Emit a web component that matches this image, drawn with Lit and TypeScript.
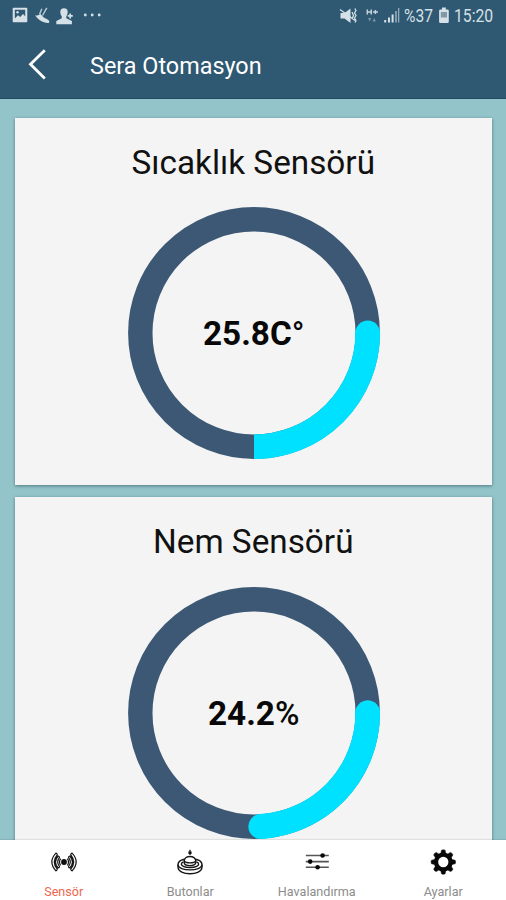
import { LitElement, html, css, svg } from "lit";
import { customElement, property } from "lit/decorators.js";

const polar = (deg: number, r: number, c: number) => {
  const a = (deg * Math.PI) / 180;
  return `${(c + r * Math.cos(a)).toFixed(2)} ${(c + r * Math.sin(a)).toFixed(2)}`;
};

@customElement("sensor-card")
class SensorCard extends LitElement {
  @property() heading = "";
  @property() value = "";
  @property() unit = "";
  @property({ type: Number }) start = 90;
  @property({ type: Boolean }) rounded = false;

  static styles = css`
    :host {
      display: flex;
      flex-direction: column;
      align-items: center;
      box-sizing: border-box;
      height: 367px;
      flex: none;
      background: #f4f4f4;
      box-shadow: 0 1px 3px rgba(20, 60, 70, 0.55);
    }
    .title {
      font-size: 33.3px;
      line-height: 40px;
      margin-top: 25px;
      color: #111;
      white-space: nowrap;
    }
    .gauge {
      display: grid;
      place-items: center;
      margin-top: 24.3px;
      margin-left: 1px;
      width: 252px;
      height: 252px;
    }
    .gauge > * {
      grid-area: 1 / 1;
    }
    .value {
      font-size: 33.3px;
      line-height: 40px;
      padding-top: 2px;
      font-weight: 700;
      color: #080808;
    }
    .unit {
      font-weight: 500;
    }
  `;

  render() {
    const path = `M${polar(this.start, 113.7, 126)}A113.7 113.7 0 0 0 ${polar(0, 113.7, 126)}`;
    return html`
      <div class="title">${this.heading}</div>
      <div class="gauge">
        <svg width="252" height="252" viewBox="0 0 252 252" fill="none" stroke-width="24.4">
          <circle cx="126" cy="126" r="113.7" stroke="#3d5875" />
          <path d=${path} stroke="#00e0ff" stroke-width="24.8" stroke-linecap=${this.rounded ? "round" : "butt"} />
          <circle cx="239.7" cy="126" r="12.4" fill="#00e0ff" stroke="none" />
        </svg>
        <div class="value">${this.value}<span class="unit">${this.unit}</span></div>
      </div>
    `;
  }
}

const sensorIcon = svg`<g fill="none" stroke="#161616" stroke-width="1.2" stroke-linejoin="round">
  <circle cx="13" cy="13" r="2.9" fill="#111" stroke="none"/>
  <path d="M4.9 4.2Q-3.2 13 4.9 21.8Q6.4 21.4 6.2 20Q.4 13 6.2 6Q6.4 4.6 4.9 4.2zM7.2 7Q1.8 13 7.2 19Q8.6 18.6 8.4 17.4Q5 13 8.4 8.6Q8.6 7.4 7.2 7zM9.6 9.6Q7.4 13 9.6 16.4"/>
  <path d="M21.1 4.2Q29.2 13 21.1 21.8Q19.6 21.4 19.8 20Q25.6 13 19.8 6Q19.6 4.6 21.1 4.2zM18.8 7Q24.2 13 18.8 19Q17.4 18.6 17.6 17.4Q21 13 17.6 8.6Q17.4 7.4 18.8 7zM16.4 9.6Q18.6 13 16.4 16.4"/></g>`;
const buttonIcon = svg`<g fill="none" stroke="#161616" stroke-width="1.4">
  <path d="M13 .8V4" stroke-width="1.3"/><path d="M11.4 2.600h3.200v2.200L13 6l-1.600-1.200z" fill="#111" stroke="none"/>
  <path d="M7.200 12C7.200 6 18.800 6 18.800 12"/>
  <path d="M7.200 11.600v2c0 4.200 11.600 4.200 11.600 0v-2M7.200 11.900c1.600 2.600 10 2.600 11.600 0"/>
  <path d="M7.200 10.200C3 11 1 13.400 1 15.800c0 6.800 24 6.800 24 0 0-2.400-2-4.800-6.200-5.600"/>
  <path d="M1 15.800v2.200c0 9 24 9 24 0v-2.200M6.400 12.800c-2.800 1.400-2.600 3.400 0 4.600 3.200 1.600 10 1.600 13.200 0 2.600-1.200 2.800-3.200 0-4.600"/></g>`;
const sliderIcon = svg`<g stroke="#555" stroke-width="1.6">
  <path d="M1.800 6.500h23M1.800 12.600h23M1.800 18.200h23"/></g>
  <g fill="#080808"><circle cx="18.600" cy="6.500" r="2.300"/><circle cx="6.200" cy="12.600" r="2.300"/><circle cx="13.600" cy="18.200" r="2.300"/></g>`;
const gearIcon = svg`<circle cx="13.300" cy="13" r="7.300" fill="none" stroke="#080808" stroke-width="4.300"/>
  ${[0, 45, 90, 135, 180, 225, 270, 315].map(
    (a) => svg`<path d="M10.800 4.500L11.500 1.200Q13.300 .2 15.100 1.200L15.800 4.500z" fill="#080808" stroke="#080808" stroke-width=".5" transform="rotate(${a} 13.3 13)"/>`
  )}`;

const tabs = [
  { label: "Sensör", icon: sensorIcon, active: true },
  { label: "Butonlar", icon: buttonIcon, active: false },
  { label: "Havalandırma", icon: sliderIcon, active: false },
  { label: "Ayarlar", icon: gearIcon, active: false },
];

@customElement("app-root")
class AppRoot extends LitElement {
  static styles = css`
    :host {
      display: flex;
      flex-direction: column;
      width: 506px;
      height: 900px;
      overflow: hidden;
      background: #93c4c9;
      font-family: Roboto, "Liberation Sans", sans-serif;
    }
    svg {
      display: block;
    }
    .top {
      height: 99px;
      flex: none;
      background: #2f5872;
      border-bottom: 1px solid #234963;
      box-sizing: border-box;
      color: #fff;
    }
    .status {
      display: flex;
      justify-content: space-between;
      height: 32px;
      color: #d5e0e7;
    }
    .right {
      display: flex;
      align-items: center;
      padding-right: 12px;
    }
    .pct,
    .clock {
      font-size: 17.5px;
      line-height: 32px;
      transform-origin: left center;
      white-space: nowrap;
    }
    .pct {
      width: 29px;
      transform: scaleX(0.89);
    }
    .clock {
      width: 40px;
      transform: scaleX(0.9);
    }
    .bar {
      display: flex;
      align-items: center;
      height: 66px;
      padding-left: 25px;
    }
    .name {
      margin-left: 41px;
      margin-top: 2px;
      font-size: 23.4px;
      line-height: 32px;
      white-space: nowrap;
    }
    .list {
      display: flex;
      flex-direction: column;
      gap: 12.4px;
      flex: 1;
      min-height: 0;
      overflow: hidden;
      padding: 19px 14.5px 0 15px;
    }
    .tabs {
      display: grid;
      grid-template-columns: repeat(4, 1fr);
      height: 60px;
      flex: none;
      background: #fff;
      box-shadow: 0 -1px 1px rgba(0, 0, 0, 0.08);
      z-index: 1;
    }
    .tab {
      display: flex;
      flex-direction: column;
      align-items: center;
      padding-top: 9px;
      padding-left: 1px;
      font-size: 12.6px;
      line-height: 16px;
      color: #8c8c8c;
    }
    .label {
      margin-top: 9px;
    }
    .active {
      color: #f0664f;
    }
  `;

  render() {
    return html`
      <div class="top">
        <div class="status">
          <svg width="110" height="32" viewBox="0 0 110 32" fill="#d5e0e7">
            <path fill-rule="evenodd" d="M13.5 7.7h13q.8 0 .8.8v13q0 .8-.8.8h-13q-.8 0-.8-.8v-13q0-.8.8-.8zm1.3 2v8.7l3.2-3.2 2.2 1.8 2.8-3.1 2.2 2.4V9.7z" />
            <circle cx="17.5" cy="12.3" r="1.2" />
            <path d="M35 15.2q3.5.7 5.5-1.2l3 3.2 4.5 2.6q2 1.3 1.2 2.6-1 1.2-4.4.2-6-1.9-9.8-7.4z" />
            <path d="M39.5 14.5l2.3-5.7M42.5 15.5L46.8 7.8" fill="none" stroke="#b4c6d1" stroke-width="1.5" />
            <path d="M64 8.3c-4.6 0-4.3 5.2-2.2 8.3v1.6l-5.5 2.9v3.1h15.6v-3.1L66.3 18.2v-1.6c2.1-3.1 2.3-8.3-2.3-8.3z" />
            <path d="M67.7 15.9h5.1M70.2 13.4v5" fill="none" stroke="#d5e0e7" stroke-width="1.7" />
            <circle cx="85.3" cy="15" r="1.4" /><circle cx="92.2" cy="15" r="1.4" /><circle cx="99.2" cy="15" r="1.4" />
          </svg>
          <div class="right">
            <svg width="66" height="32" viewBox="338 0 66 32" fill="#d5e0e7">
              <path d="M340.5 13h4l6-4.5v14.5l-6-4.5h-4z" />
              <path d="M340 9.5l15 11M352 12l1.5 3.5-1.5 3.5M354.8 8.5l1.2 2-1.5 2.5 1.5 2.5-1.5 2.5 1.5 2.5-1 2" fill="none" stroke="#d5e0e7" stroke-width="1.3" />
              <path d="M367.3 9.5v5M371.3 9.5v5M367.3 12h4M373 12h5M375.4 10v4" fill="none" stroke="#c3d1da" stroke-width="1.5" />
              <path d="M368 18h3.4l-1.7 3.5zM372.5 21.5h3.4l-1.7-3.5z" fill="#7896a8" />
              <path d="M384.2 20h2v2.5h-2zM388 17.5h2v5h-2zM391.6 14.5h2v8h-2z" /><path d="M395.2 11h1.6v11.5h-1.6zM398 8h1.3v14.5H398z" fill="#93abb9" />
            </svg>
            <div class="pct">%37</div>
            <svg width="21" height="32" viewBox="433 0 21 32" fill="#d5e0e7">
              <path d="M442 7.5h3.8v2h1.7q1.3 0 1.3 1.3v11q0 1.2-1.3 1.2h-7.1q-1.3 0-1.3-1.2v-11q0-1.3 1.3-1.3h1.6z" />
              <path d="M440.8 12h6.2v5.5h-6.2z" fill="#8199a7" />
            </svg>
            <div class="clock">15:20</div>
          </div>
        </div>
        <div class="bar">
          <svg width="24" height="34" viewBox="0 0 24 34" fill="none" stroke="#fff" stroke-width="2.8">
            <path d="M19.8 2.3L5.5 16.2 19.8 30.5" />
          </svg>
          <div class="name">Sera Otomasyon</div>
        </div>
      </div>
      <div class="list">
        <sensor-card heading="Sıcaklık Sensörü" value="25.8C" unit="°" start="90"></sensor-card>
        <sensor-card heading="Nem Sensörü" value="24.2" unit="%" start="86.6" rounded></sensor-card>
      </div>
      <div class="tabs">
        ${tabs.map(
          (t) => html`<div class="tab ${t.active ? "active" : ""}">
            <svg width="26" height="26" viewBox="0 0 26 26">${t.icon}</svg>
            <div class="label">${t.label}</div>
          </div>`
        )}
      </div>
    `;
  }
}
